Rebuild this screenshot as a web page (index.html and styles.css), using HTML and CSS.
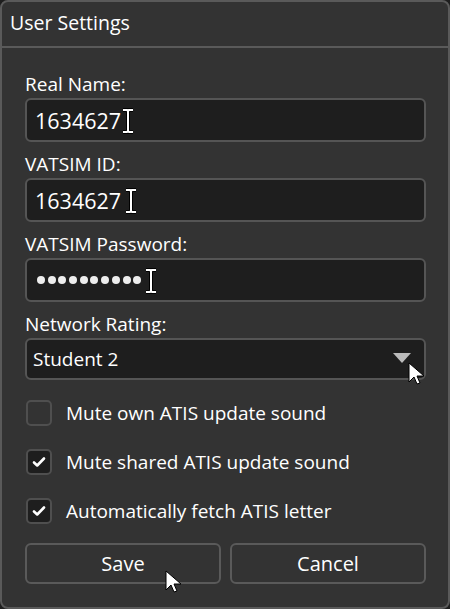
FILE: index.html
```html
<!DOCTYPE html>
<html>
<head>
<meta charset="utf-8">
<link rel="stylesheet" href="styles.css">
</head>
<body>
<div class="window">
  <div class="titlebar">User Settings</div>
  <div class="content">
    <div class="label">Real Name:</div>
    <div class="input"><span class="val">1634627</span><svg class="ibeam" width="14" height="26" viewBox="0 0 14 26"><path d="M2 2h4l1 1 1-1h4M7 3v20M2 24h4l1-1 1 1h4" fill="none" stroke="#000" stroke-width="4"/><path d="M2 2h4l1 1 1-1h4M7 3v20M2 24h4l1-1 1 1h4" fill="none" stroke="#fff" stroke-width="2"/></svg></div>
    <div class="label">VATSIM ID:</div>
    <div class="input"><span class="val">1634627</span><svg class="ibeam ib2" width="14" height="26" viewBox="0 0 14 26"><path d="M2 2h4l1 1 1-1h4M7 3v20M2 24h4l1-1 1 1h4" fill="none" stroke="#000" stroke-width="4"/><path d="M2 2h4l1 1 1-1h4M7 3v20M2 24h4l1-1 1 1h4" fill="none" stroke="#fff" stroke-width="2"/></svg></div>
    <div class="label">VATSIM Password:</div>
    <div class="input"><span class="dots"><i></i><i></i><i></i><i></i><i></i><i></i><i></i><i></i><i></i><i></i></span><svg class="ibeam ib3" width="14" height="26" viewBox="0 0 14 26"><path d="M2 2h4l1 1 1-1h4M7 3v20M2 24h4l1-1 1 1h4" fill="none" stroke="#000" stroke-width="4"/><path d="M2 2h4l1 1 1-1h4M7 3v20M2 24h4l1-1 1 1h4" fill="none" stroke="#fff" stroke-width="2"/></svg></div>
    <div class="label">Network Rating:</div>
    <div class="select"><span class="selval">Student 2</span><span class="tri"></span>
      <svg class="arrow arrow-dd" width="18" height="24" viewBox="0 0 18 24"><path d="M1 1v19l5-5 3 7 3-1-3-7h7z" fill="#fff" stroke="#000" stroke-width="1"/></svg>
    </div>
    <div class="checks">
      <div class="check"><span class="box"></span><span>Mute own ATIS update sound</span></div>
      <div class="check"><span class="box on"><svg width="16" height="16" viewBox="0 0 16 16"><path d="M3 8.5l3.2 3L13 4.5" fill="none" stroke="#fff" stroke-width="2.6" stroke-linecap="round" stroke-linejoin="round"/></svg></span><span>Mute shared ATIS update sound</span></div>
      <div class="check"><span class="box on"><svg width="16" height="16" viewBox="0 0 16 16"><path d="M3 8.5l3.2 3L13 4.5" fill="none" stroke="#fff" stroke-width="2.6" stroke-linecap="round" stroke-linejoin="round"/></svg></span><span>Automatically fetch ATIS letter</span></div>
    </div>
    <div class="buttons">
      <div class="btn">Save<svg class="arrow arrow-save" width="18" height="24" viewBox="0 0 18 24"><path d="M1 1v19l5-5 3 7 3-1-3-7h7z" fill="#fff" stroke="#000" stroke-width="1"/></svg></div>
      <div class="btn">Cancel</div>
    </div>
  </div>
</div>
</body>
</html>
```
FILE: styles.css
```css
html, body {
  margin: 0;
  padding: 0;
  background: #1e1e1e;
}
body {
  font-family: "Open Sans", "Noto Sans", sans-serif;
  font-weight: 500;
  color: #fff;
}
.window {
  box-sizing: border-box;
  width: 450px;
  height: 609px;
  background: #333;
  border: 2px solid #5a5a5a;
  border-radius: 8px;
  display: flex;
  flex-direction: column;
}
.titlebar {
  height: 44px;
  line-height: 42px;
  padding-left: 8px;
  font-size: 19.5px;
  border-bottom: 2px solid #5a5a5a;
}
.content {
  padding: 25px 22px 0 23px;
  display: flex;
  flex-direction: column;
}
.label {
  font-size: 19px;
  line-height: 22px;
  margin-bottom: 3px;
}
.input, .select {
  box-sizing: border-box;
  height: 44px;
  background: #1e1e1e;
  border: 2px solid #555;
  border-radius: 6px;
  display: flex;
  align-items: center;
  padding-left: 8px;
  margin-bottom: 11px;
  position: relative;
}
.val {
  font-size: 21.5px;
  letter-spacing: 0px;
}
.ibeam { margin-left: 0px; margin-top: 2px; }
.ib2 { margin-left: 3px; }
.ib3 { margin-left: 3px; }
.dots { display: flex; gap: 2.7px; margin-left: 2px; }
.dots i {
  display: block;
  width: 8px;
  height: 8px;
  border-radius: 50%;
  background: #eee;
}
.select {
  height: 42px;
  padding-left: 6px;
  margin-bottom: 20px;
}
.selval { font-size: 19px; flex: 1; }
.tri {
  width: 0; height: 0;
  border-left: 9px solid transparent;
  border-right: 9px solid transparent;
  border-top: 10px solid #bbb;
  margin-right: 13px;
  margin-top: -2px;
}
.arrow { position: absolute; }
.arrow-dd { left: 381px; top: 22px; }
.checks {
  display: flex;
  flex-direction: column;
  gap: 23px;
  padding-left: 1px;
}
.check {
  display: flex;
  align-items: center;
  gap: 14px;
  font-size: 19px;
  height: 26px;
}
.box {
  box-sizing: border-box;
  width: 26px;
  height: 26px;
  border: 2px solid #4f4f4f;
  border-radius: 5px;
  display: flex;
  align-items: center;
  justify-content: center;
}
.box.on { background: #1e1e1e; }
.buttons {
  display: flex;
  gap: 9px;
  margin-top: 19px;
}
.btn {
  box-sizing: border-box;
  flex: 1;
  height: 41px;
  border: 2px solid #5a5a5a;
  border-radius: 6px;
  display: flex;
  align-items: center;
  justify-content: center;
  font-size: 20px;
  position: relative;
}
.arrow-save { left: 138px; top: 25px; }
```
